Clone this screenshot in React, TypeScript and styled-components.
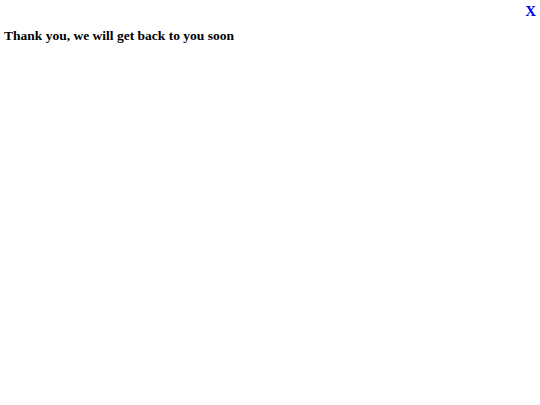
import React from "react";
import styled, { createGlobalStyle } from "styled-components";

const GlobalStyle = createGlobalStyle`
    body {
        margin: 0;
        background: #ffffff;
        font-family: "Liberation Serif", "Times New Roman", serif;
    }
`;

const Page = styled.div`
    display: flex;
    flex-direction: column;
    padding: 3px 4px 4px 4px;
`;

const TopBar = styled.div`
    display: flex;
    justify-content: flex-end;
`;

const CloseLink = styled.a`
    color: #0000ee;
    font-weight: bold;
    font-size: 15px;
    text-decoration: none;
    cursor: pointer;
`;

const Message = styled.div`
    margin-top: 8px;
    font-size: 13.5px;
    font-weight: bold;
    color: #000000;
`;

const App: React.FC = () => {
    return (
        <>
            <GlobalStyle />
            <Page>
                <TopBar>
                    <CloseLink href="#">X</CloseLink>
                </TopBar>
                <Message>Thank you, we will get back to you soon</Message>
            </Page>
        </>
    );
};

export default App;
